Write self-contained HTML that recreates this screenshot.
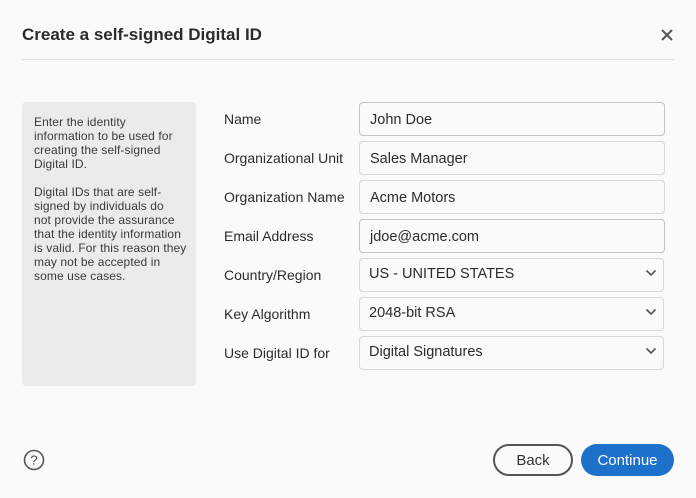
<!DOCTYPE html>
<html><head><style>
*{margin:0;padding:0;box-sizing:border-box}
body{width:696px;height:498px;background:#fafafa;font-family:"Liberation Sans",sans-serif;color:#2c2c2c;position:relative;overflow:hidden}
.abs{position:absolute}
h1{position:absolute;left:22px;top:25px;font-size:17px;font-weight:bold;color:#2c2c2c}
.div{left:22px;top:59px;width:652px;height:1px;background:#e1e1e1}
.panel{left:22px;top:102px;width:174px;height:284px;background:#ebebeb;border-radius:4px;padding:13px 0 0 12px;font-size:12px;line-height:14px;color:#3a3a3a;letter-spacing:0.1px;white-space:nowrap}
.lbl{left:224px;font-size:14px;color:#2c2c2c}
.in{left:359px;width:306px;height:34px;border:1px solid #d8d8d8;border-radius:4px;background:#fafafa;font-size:14.5px;padding-left:10px;line-height:34px;color:#2c2c2c}
.in.dk{border-color:#c4c4c4}
.sel{line-height:30px;height:34px;padding-left:9px}
.chev{position:absolute;right:6px;top:10px}
.btn{top:444px;height:32px;border-radius:16px;font-size:15px;text-align:center;line-height:30px}
</style></head><body>
<h1>Create a self-signed Digital ID</h1>
<svg class="abs" style="left:660px;top:28px" width="14" height="14" viewBox="0 0 14 14"><path d="M2 2L12 12M12 2L2 12" stroke="#555" stroke-width="2"/></svg>
<div class="abs div"></div>
<div class="abs panel">Enter the identity<br>information to be used for<br>creating the self-signed<br>Digital ID.<br><br>Digital IDs that are self-<br>signed by individuals do<br>not provide the assurance<br>that the identity information<br>is valid. For this reason they<br>may not be accepted in<br>some use cases.</div>
<div class="abs lbl" style="top:111px">Name</div>
<div class="abs lbl" style="top:150px">Organizational Unit</div>
<div class="abs lbl" style="top:189px">Organization Name</div>
<div class="abs lbl" style="top:228px">Email Address</div>
<div class="abs lbl" style="top:267px">Country/Region</div>
<div class="abs lbl" style="top:306px">Key Algorithm</div>
<div class="abs lbl" style="top:345px">Use Digital ID for</div>
<div class="abs in dk" style="top:102px">John Doe</div>
<div class="abs in" style="top:141px">Sales Manager</div>
<div class="abs in" style="top:180px">Acme Motors</div>
<div class="abs in dk" style="top:219px">jdoe@acme.com</div>
<div class="abs in sel" style="top:258px;width:305px">US - UNITED STATES<svg class="chev" width="12" height="8" viewBox="0 0 12 8"><path d="M1.5 1.5L6 6L10.5 1.5" stroke="#555" stroke-width="1.6" fill="none"/></svg></div>
<div class="abs in sel" style="top:297px;width:305px">2048-bit RSA<svg class="chev" width="12" height="8" viewBox="0 0 12 8"><path d="M1.5 1.5L6 6L10.5 1.5" stroke="#555" stroke-width="1.6" fill="none"/></svg></div>
<div class="abs in sel" style="top:336px;width:305px">Digital Signatures<svg class="chev" width="12" height="8" viewBox="0 0 12 8"><path d="M1.5 1.5L6 6L10.5 1.5" stroke="#555" stroke-width="1.6" fill="none"/></svg></div>
<svg class="abs" style="left:23px;top:449px" width="22" height="22" viewBox="0 0 22 22"><circle cx="11" cy="11" r="9.5" stroke="#555" stroke-width="1.6" fill="none"/><text x="11" y="15.5" font-size="13" font-family="Liberation Sans" text-anchor="middle" fill="#444">?</text></svg>
<div class="abs btn" style="left:493px;width:80px;border:2px solid #555;color:#333">Back</div>
<div class="abs btn" style="left:581px;width:93px;background:#1e71cb;color:#fff;line-height:34px">Continue</div>
</body></html>
